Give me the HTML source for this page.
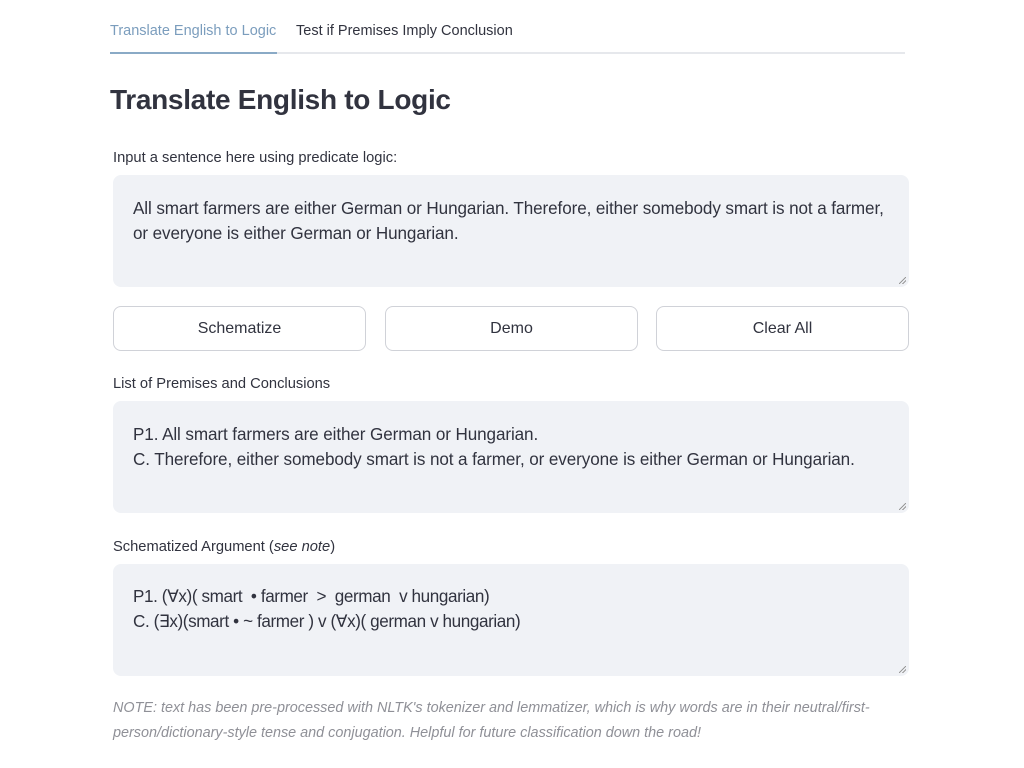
<!DOCTYPE html>
<html><head><meta charset="utf-8"><style>
body{margin:0;background:#fff;font-family:"Liberation Sans","DejaVu Sans",sans-serif;color:#31333f;width:1024px;height:768px;overflow:hidden;position:relative}
.a{position:absolute;white-space:nowrap}
.tab{font-size:14.5px;top:23px}
.box{position:absolute;left:113px;width:796px;height:112px;background:#f0f2f6;border-radius:8px}
.box .t{position:absolute;left:20px;font-size:17.1px;line-height:24.5px;white-space:nowrap;letter-spacing:-0.1px}
.grip{position:absolute;right:3px;bottom:3px;width:7px;height:7px;background:linear-gradient(135deg,transparent 45%,#999 46%,#999 54%,transparent 55%,transparent 70%,#999 71%,#999 79%,transparent 80%)}
.lbl{font-size:14.7px}
.btn{position:absolute;top:306px;width:251px;height:43px;border:1px solid #d0d2d8;border-radius:8px;background:#fff;font-size:16px;text-align:center;line-height:43px}
</style></head><body>
<div class="a tab" style="left:110px;color:#7b9dbd">Translate English to Logic</div>
<div class="a tab" style="left:296px">Test if Premises Imply Conclusion</div>
<div class="a" style="left:110px;top:52px;width:795px;height:2px;background:#e6e8ec"></div>
<div class="a" style="left:110px;top:52px;width:167px;height:2px;background:#8aaac6"></div>
<div class="a" style="left:110px;top:84px;font-size:28px;font-weight:bold;letter-spacing:-0.3px">Translate English to Logic</div>
<div class="a lbl" style="left:113px;top:150px">Input a sentence here using predicate logic:</div>
<div class="box" style="top:175px"><div class="t" style="top:22px">All smart farmers are either German or Hungarian. Therefore, either somebody smart is not a farmer,<br>or everyone is either German or Hungarian.</div><div class="grip"></div></div>
<div class="btn" style="left:113px">Schematize</div>
<div class="btn" style="left:385px">Demo</div>
<div class="btn" style="left:656px">Clear All</div>
<div class="a lbl" style="left:113px;top:376px">List of Premises and Conclusions</div>
<div class="box" style="top:401px"><div class="t" style="top:22px">P1. All smart farmers are either German or Hungarian.<br>C. Therefore, either somebody smart is not a farmer, or everyone is either German or Hungarian.</div><div class="grip"></div></div>
<div class="a lbl" style="left:113px;top:539px">Schematized Argument (<i>see note</i>)</div>
<div class="box" style="top:564px"><div class="t" style="top:21px;letter-spacing:-0.4px">P1. (∀x)( smart &nbsp;• farmer &nbsp;&gt; &nbsp;german &nbsp;v hungarian)<br>C. (∃x)(smart • ~ farmer ) v (∀x)( german v hungarian)</div><div class="grip"></div></div>
<div class="a" style="left:113px;top:696px;font-size:14.4px;line-height:25px;font-style:italic;color:#8f9097">NOTE: text has been pre-processed with NLTK's tokenizer and lemmatizer, which is why words are in their neutral/first-<br>person/dictionary-style tense and conjugation. Helpful for future classification down the road!</div>
</body></html>
